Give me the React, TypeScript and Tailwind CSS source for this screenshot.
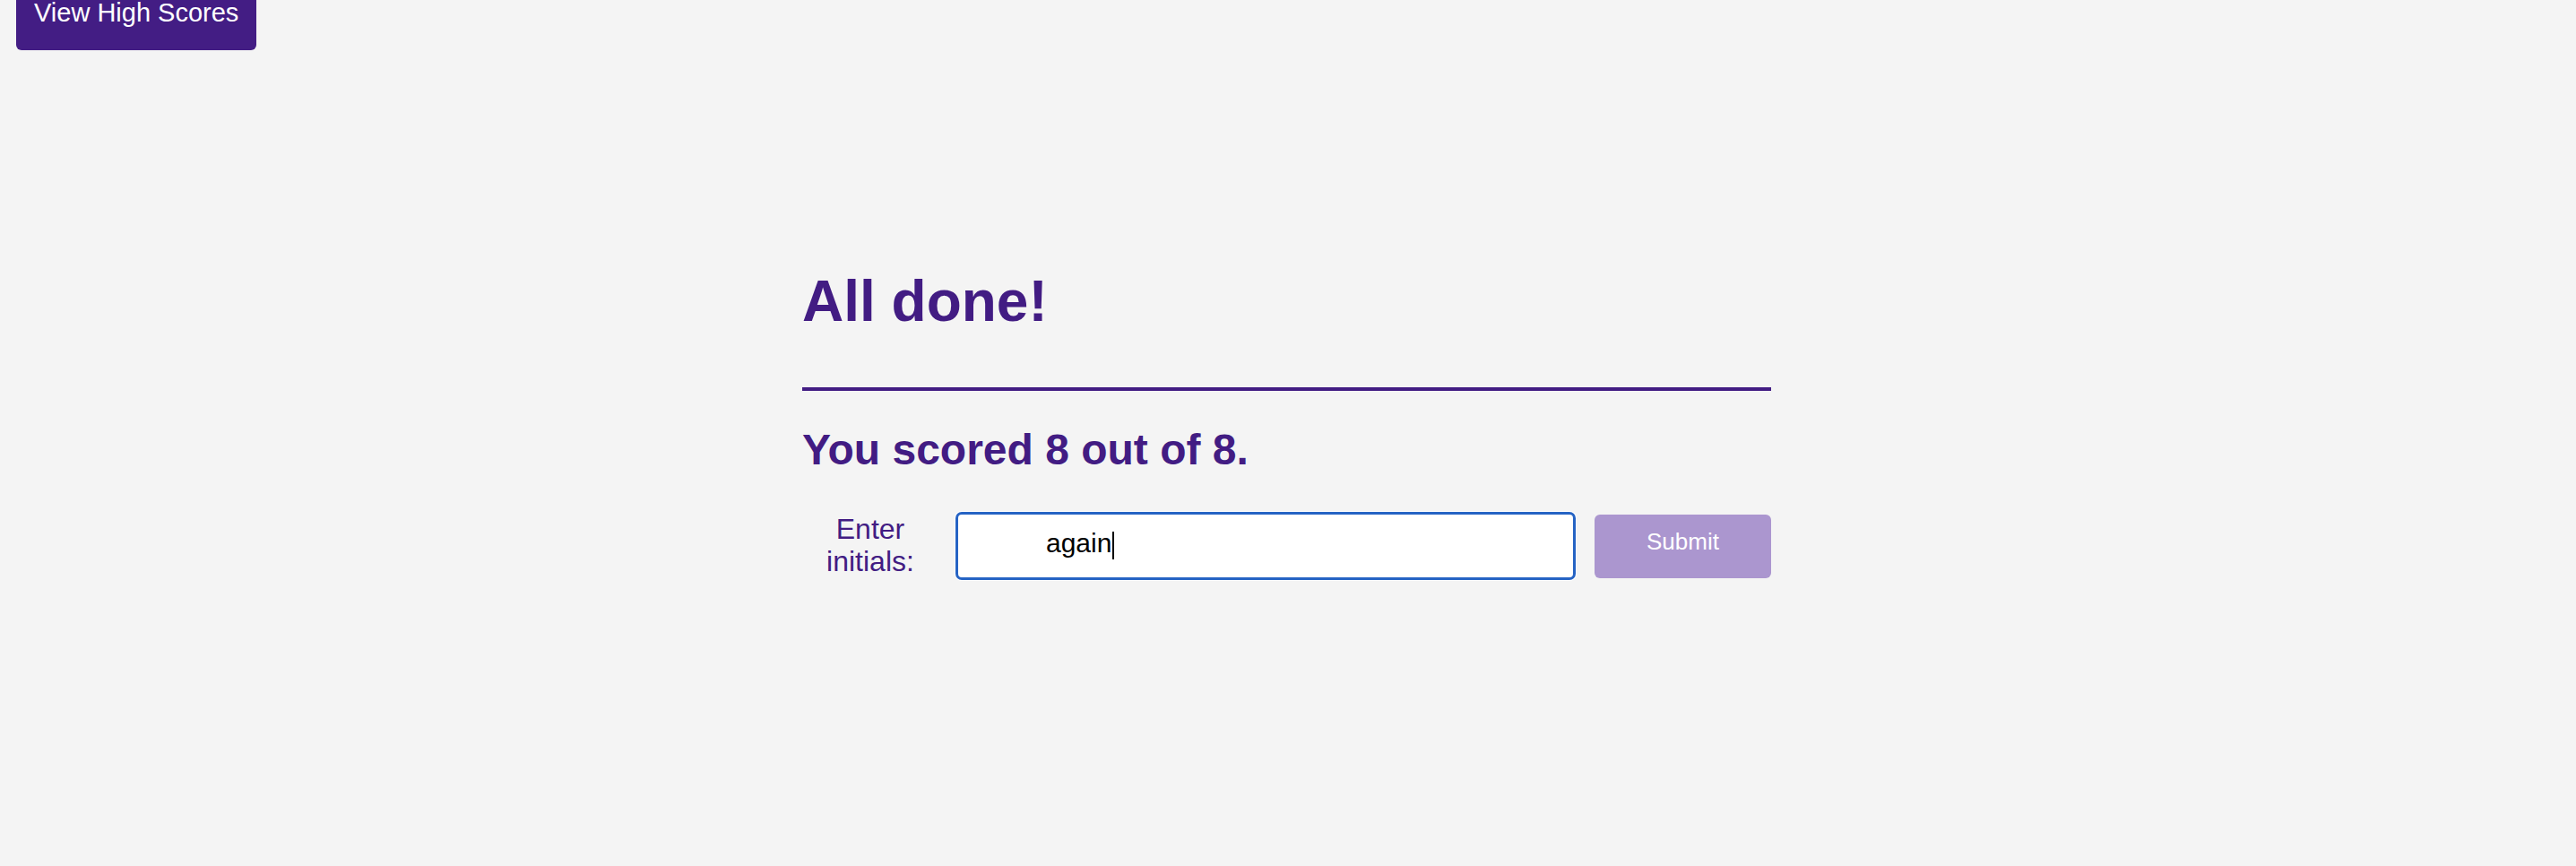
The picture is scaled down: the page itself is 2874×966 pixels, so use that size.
import React from "react";

const purple = "#421c83";

export default function App() {
    return (
        <div className="min-h-[966px] w-full bg-[#f4f4f4] font-['Liberation_Sans',Arial,sans-serif]">
            <div className="px-[18px]">
                <button className="-mt-[25px] rounded-md bg-[#431d84] px-5 pt-[23px] pb-[25px] text-[29px] leading-[33px] text-white">
                    View High Scores
                </button>
            </div>

            <main className="mx-auto mt-[243px] w-[1084px] pr-[3px]">
                <h1 className="text-[64px] font-bold leading-[74px] text-[#421c83]">All done!</h1>
                <div className="mt-[59px] h-[4px] w-full bg-[#421c83]" />
                <h2 className="mt-[38px] text-[48px] font-bold leading-[55px] text-[#421c83]">You scored 8 out of 8.</h2>

                <form className="mt-[42px] flex items-center" onSubmit={(e) => e.preventDefault()}>
                    <label className="w-[152px] pb-[2px] text-center text-[32px] leading-[36px]" style={{ color: purple }}>
                        Enter
                        <br />
                        initials:
                    </label>
                    <div className="ml-[19px] flex h-[76px] w-[692px] items-center rounded-[7px] border-[3px] border-[#2563c4] bg-white pb-[8px] pl-[98px] text-[30px] text-black shadow-[0_0_0_1px_#ffffff]">
                        <span>again</span>
                        <span className="ml-[1px] mt-[6px] inline-block h-[31px] w-[2px] bg-black" />
                    </div>
                    <button
                        type="submit"
                        className="ml-[21px] h-[71px] w-[197px] rounded-md bg-[#ab96cf] pb-[10px] text-[26px] text-white"
                    >
                        Submit
                    </button>
                </form>
            </main>
        </div>
    );
}
